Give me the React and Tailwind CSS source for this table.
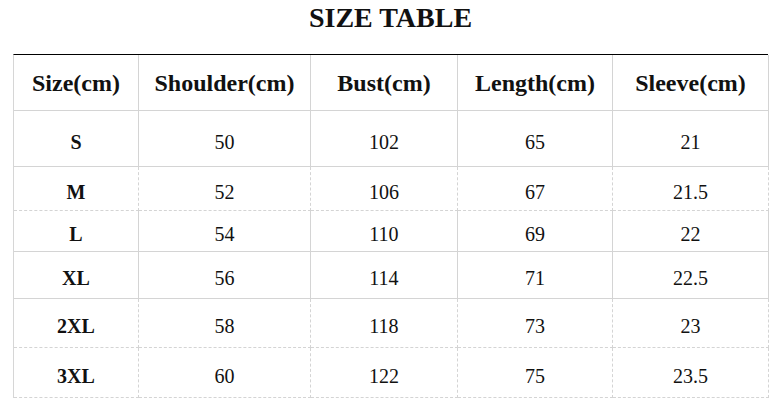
const columns = ['Size(cm)', 'Shoulder(cm)', 'Bust(cm)', 'Length(cm)', 'Sleeve(cm)']

const rows = [
    { size: 'S', values: ['50', '102', '65', '21'], h: 'h-[56px]', line: 'border-solid' },
    { size: 'M', values: ['52', '106', '67', '21.5'], h: 'h-[44px]', line: 'border-dashed' },
    { size: 'L', values: ['54', '110', '69', '22'], h: 'h-[41px]', line: 'border-solid' },
    { size: 'XL', values: ['56', '114', '71', '22.5'], h: 'h-[47px]', line: 'border-solid' },
    { size: '2XL', values: ['58', '118', '73', '23'], h: 'h-[49px]', line: 'border-dashed' },
    { size: '3XL', values: ['60', '122', '75', '23.5'], h: 'h-[50px]', line: 'border-dashed' },
]

const grid = 'grid grid-cols-[125px_172px_147px_155px_156px]'

function App() {
    return (
        <div
            className="w-[781px] h-[413px] bg-white text-[#111] overflow-hidden"
            style={{ fontFamily: '"Liberation Serif", "Times New Roman", serif' }}
        >
            {/* title */}
            <div className="h-[54px] pt-[2px] text-center text-[28px] leading-[32px] font-bold">
                SIZE TABLE
            </div>

            <div className="ml-[13px] w-[755px] border-solid border-t-[1.5px] border-t-black border-l border-l-[#d6d6d6]">
                {/* header */}
                <div className={`${grid} h-[56px]`}>
                    {columns.map(c => (
                        <div
                            key={c}
                            className="flex items-center justify-center border-r border-b border-[#d4d4d4] text-[24px] font-bold"
                        >
                            {c}
                        </div>
                    ))}
                </div>

                {rows.map(r => (
                    <div key={r.size} className={`${grid} ${r.h}`}>
                        <div className={`flex items-center justify-center pt-[6px] border-r border-b border-[#d4d4d4] ${r.line} text-[20px] font-bold`}>
                            {r.size}
                        </div>
                        {r.values.map((v, i) => (
                            <div
                                key={i}
                                className={`flex items-center justify-center pt-[6px] border-r border-b border-[#d4d4d4] ${r.line} text-[20px]`}
                            >
                                {v}
                            </div>
                        ))}
                    </div>
                ))}
            </div>
        </div>
    )
}

export default App
